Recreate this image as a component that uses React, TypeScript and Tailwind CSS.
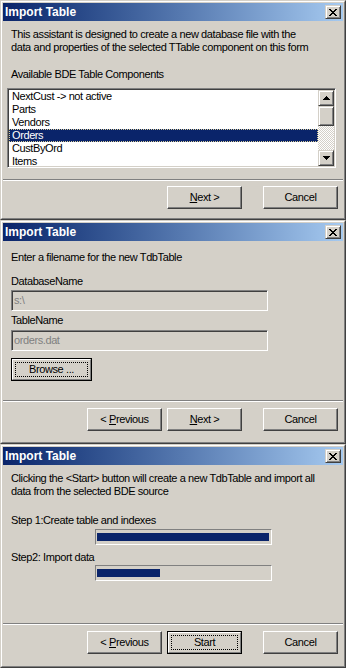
import type { ReactNode } from "react";

const raised =
  "border border-t-white border-l-white border-b-[#404040] border-r-[#404040] shadow-[inset_-1px_-1px_#808080]";
const raisedSmall =
  "border border-t-[#d4d0c8] border-l-[#d4d0c8] border-b-[#404040] border-r-[#404040] shadow-[inset_1px_1px_#fff,inset_-1px_-1px_#808080]";
const sunken =
  "border border-t-[#808080] border-l-[#808080] border-b-white border-r-white shadow-[inset_1px_1px_#404040,inset_-1px_-1px_#d4d0c8] p-px";

const tableItems = ["NextCust -> not active", "Parts", "Vendors", "Orders", "CustByOrd", "Items"];

function CloseGlyph() {
  const rows = [
    [0, 1, 6, 7],
    [1, 2, 5, 6],
    [2, 3, 4, 5],
    [3, 4],
    [2, 3, 4, 5],
    [1, 2, 5, 6],
    [0, 1, 6, 7]
  ];
  return (
    <svg width="8" height="7" viewBox="0 0 8 7" shapeRendering="crispEdges">
      {rows.map((xs, y) => xs.map((x) => <rect key={`${x}-${y}`} x={x} y={y} width="1" height="1" fill="#000" />))}
    </svg>
  );
}

function Arrow({ down = false }: { down?: boolean }) {
  const rows = [
    [3, 1],
    [2, 3],
    [1, 5],
    [0, 7]
  ];
  return (
    <svg width="7" height="4" viewBox="0 0 7 4" shapeRendering="crispEdges">
      {rows.map(([x, w], i) => (
        <rect key={i} x={x} y={down ? 3 - i : i} width={w} height="1" fill="#000" />
      ))}
    </svg>
  );
}

function TitleBar() {
  return (
    <div className="flex h-[18px] shrink-0 items-center justify-between bg-linear-to-r from-[#0a246a] to-[#a6caf0] pl-[2px] pr-[2px]">
      <span className="text-[12px] leading-[18px] font-bold tracking-normal text-white">Import Table</span>
      <div className={`flex h-[14px] w-[16px] items-center justify-center bg-[#d4d0c8] ${raisedSmall}`}>
        <CloseGlyph />
      </div>
    </div>
  );
}

function Window({ children, className }: { children: ReactNode; className: string }) {
  return (
    <div className={`flex shrink-0 flex-col border border-t-[#d4d0c8] border-l-[#d4d0c8] border-b-[#404040] border-r-[#404040] ${className}`}>
      <div className="flex flex-1 flex-col border border-t-white border-l-white border-b-[#808080] border-r-[#808080] p-px">
        <TitleBar />
        {children}
      </div>
    </div>
  );
}

function Button({ children, isDefault = false, className = "w-[75px]" }: { children: ReactNode; isDefault?: boolean; className?: string }) {
  if (isDefault) {
    return (
      <div className={`flex h-[23px] border border-black ${className}`}>
        <div className="flex flex-1 border border-t-white border-l-white border-b-[#808080] border-r-[#808080] p-[2px]">
          <div className="flex flex-1 items-center justify-center border border-dotted border-black">
            <span>{children}</span>
          </div>
        </div>
      </div>
    );
  }
  return (
    <div className={`flex h-[23px] items-center justify-center ${raised} ${className}`}>
      <span>{children}</span>
    </div>
  );
}

function Footer({ children, className }: { children: ReactNode; className: string }) {
  return (
    <div className="mt-auto">
      <div className="h-[2px] border-t border-b border-t-[#808080] border-b-white" />
      <div className={`flex justify-end pr-[5px] ${className}`}>{children}</div>
    </div>
  );
}

function Scrollbar() {
  return (
    <div className="flex w-[16px] flex-col bg-[#d4d0c8]">
      <div className={`flex h-[16px] items-center justify-center ${raisedSmall}`}>
        <Arrow />
      </div>
      <div className={`h-[20px] ${raisedSmall}`} />
      <div className="flex-1 bg-[image:repeating-conic-gradient(#fff_0_25%,#d4d0c8_0_50%)] bg-size-[2px_2px]" />
      <div className={`flex h-[16px] items-center justify-center ${raisedSmall}`}>
        <Arrow down />
      </div>
    </div>
  );
}

function Edit({ value }: { value: string }) {
  return (
    <div className={`flex h-[21px] w-[257px] items-center bg-[#d4d0c8] pl-[1px] text-[#808080] ${sunken}`}>
      <span className="pl-px">{value}</span>
    </div>
  );
}

function Progress({ fill }: { fill: string }) {
  return (
    <div className="ml-[84px] flex h-[16px] w-[177px] items-start border border-t-[#808080] border-l-[#808080] border-b-white border-r-white pl-px pt-[3px]">
      <div className={`h-[8px] bg-[#0a246a] ${fill}`} />
    </div>
  );
}

export default function App() {
  return (
    <div className="flex h-[668px] w-[346px] flex-col overflow-hidden bg-[#d4d0c8] font-['Liberation_Sans',Arial,sans-serif] text-[11px] leading-[13px] tracking-[-0.4px] whitespace-nowrap text-black">
      <Window className="h-[220px]">
        <div className="mt-[7px] pl-[8px]">
          <p>This assistant is designed to create a new database file with the</p>
          <p>data and properties of the selected TTable component on this form</p>
          <p className="mt-[14px]">Available BDE Table Components</p>
        </div>
        <div className={`mt-[7px] ml-[4px] mr-[7px] flex h-[80px] ${sunken}`}>
          <div className="flex-1 overflow-hidden bg-white">
            {tableItems.map((item) => (
              <div
                key={item}
                className={
                  item === "Orders"
                    ? "h-[13px] border border-dotted border-[#d8cc98] bg-[#0a246a] pl-[2px] leading-[11px] text-white"
                    : "h-[13px] pl-[3px]"
                }
              >
                {item}
              </div>
            ))}
          </div>
          <Scrollbar />
        </div>
        <Footer className="pt-[5px] pb-[8px]">
          <Button>
            <u>N</u>ext &gt;
          </Button>
          <Button className="ml-[21px] w-[75px]">Cancel</Button>
        </Footer>
      </Window>

      <Window className="h-[224px]">
        <div className="mt-[10px] flex flex-col items-start pl-[8px]">
          <p>Enter a filename for the new TdbTable</p>
          <p className="mt-[11px]">DatabaseName</p>
          <div className="mt-[2px]">
            <Edit value={"s:\\"} />
          </div>
          <p className="mt-[3px]">TableName</p>
          <div className="mt-[3px]">
            <Edit value="orders.dat" />
          </div>
          <div className="mt-[7px]">
            <Button isDefault className="w-[81px]">
              Browse ...
            </Button>
          </div>
        </div>
        <Footer className="pt-[6px] pb-[10px]">
          <Button>
            &lt; <u>P</u>revious
          </Button>
          <Button className="ml-[5px] w-[75px]">
            <u>N</u>ext &gt;
          </Button>
          <Button className="ml-[21px] w-[75px]">Cancel</Button>
        </Footer>
      </Window>

      <Window className="h-[224px]">
        <div className="mt-[7px] pl-[8px]">
          <p>Clicking the {"<Start>"} button will create a new TdbTable and import all</p>
          <p>data from the selected BDE source</p>
          <p className="mt-[16px]">Step 1:Create table and indexes</p>
          <div className="mt-[2px]">
            <Progress fill="w-[172px]" />
          </div>
          <p className="mt-[6px]">Step2: Import data</p>
          <div className="mt-[1px]">
            <Progress fill="w-[63px]" />
          </div>
        </div>
        <Footer className="pt-[6px] pb-[11px]">
          <Button>
            &lt; <u>P</u>revious
          </Button>
          <Button isDefault className="ml-[5px] w-[75px]">
            Start
          </Button>
          <Button className="ml-[21px] w-[75px]">Cancel</Button>
        </Footer>
      </Window>
    </div>
  );
}
